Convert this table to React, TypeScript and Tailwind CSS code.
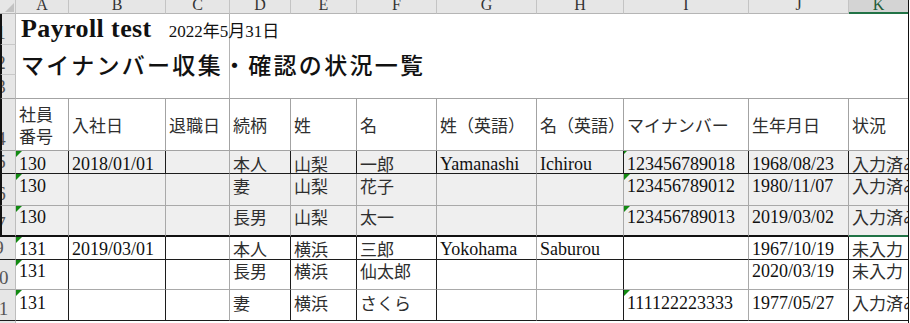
const SERIF = "font-['Liberation_Serif','Noto_Sans_CJK_JP',serif]"
const JP = "font-['Noto_Sans_CJK_JP','Noto_Sans',sans-serif]"

const LETTERS = ['A', 'B', 'C', 'D', 'E', 'F', 'G', 'H', 'I', 'J', 'K']

type Line = 'd' | 'g' | 'n'
type Tri = 'big' | 'small' | null

const RIGHT: Record<Line, string> = {
  d: 'border-r border-r-[#1c1c1c]',
  g: 'border-r border-r-[#a9a9a9]',
  n: '',
}

const BOTTOM: Record<string, string> = {
  d: 'border-b border-b-[#1c1c1c]',
  g: 'border-b border-b-[#a9a9a9]',
  t: 'border-b-2 border-b-[#111111]',
  sel: 'border-b-2 border-b-[#217346]',
}

type Row = {
  n: string
  cells: string[]
  v: Line[]
  b: string
  bg: string
  pt: string
  tri: Tri[]
  edge?: boolean
  selK?: boolean
}

const row5V: Line[] = ['d', 'd', 'g', 'd', 'd', 'd', 'g', 'd', 'd', 'd', 'n']
const grayV: Line[] = ['g', 'g', 'g', 'g', 'g', 'g', 'g', 'g', 'g', 'g', 'n']
const lowV: Line[] = ['d', 'd', 'g', 'd', 'd', 'd', 'g', 'd', 'g', 'd', 'n']

const triA: Tri[] = ['big', null, null, null, null, null, null, null, null, null, null]
const triAI: Tri[] = ['big', null, null, null, null, null, null, null, 'big', null, null]
const triAi: Tri[] = ['big', null, null, null, null, null, null, null, 'small', null, null]

const rows: Row[] = [
  {
    n: '5',
    cells: ['130', '2018/01/01', '', '本人', '山梨', '一郎', 'Yamanashi', 'Ichirou', '123456789018', '1968/08/23', '入力済み'],
    v: row5V, b: 'd', bg: 'bg-[#efefef]', pt: 'pt-[3px]', tri: triAi, edge: true,
  },
  {
    n: '6',
    cells: ['130', '', '', '妻', '山梨', '花子', '', '', '123456789012', '1980/11/07', '入力済み'],
    v: grayV, b: 'g', bg: 'bg-[#efefef]', pt: 'pt-[2px]', tri: triAI, edge: true,
  },
  {
    n: '7',
    cells: ['130', '', '', '長男', '山梨', '太一', '', '', '123456789013', '2019/03/02', '入力済み'],
    v: grayV, b: 't', bg: 'bg-[#efefef]', pt: 'pt-[1px]', tri: triAI, edge: true, selK: true,
  },
  {
    n: '9',
    cells: ['131', '2019/03/01', '', '本人', '横浜', '三郎', 'Yokohama', 'Saburou', '', '1967/10/19', '未入力'],
    v: lowV, b: 'd', bg: 'bg-white', pt: 'pt-[2px]', tri: triA,
  },
  {
    n: '10',
    cells: ['131', '', '', '長男', '横浜', '仙太郎', '', '', '', '2020/03/19', '未入力'],
    v: lowV, b: 'g', bg: 'bg-white', pt: 'pt-[1px]', tri: triA,
  },
  {
    n: '11',
    cells: ['131', '', '', '妻', '横浜', 'さくら', '', '', '111122223333', '1977/05/27', '入力済み'],
    v: lowV, b: 'd', bg: 'bg-white', pt: 'pt-[3px]', tri: triAI,
  },
]

const heads = ['社員\n番号', '入社日', '退職日', '続柄', '姓', '名', '姓（英語）', '名（英語）', 'マイナンバー', '生年月日', '状況']

const isAscii = (s: string) => /^[\x00-\x7F]*$/.test(s)

function Flag({ size }: { size: 'big' | 'small' }) {
  const s = size === 'big' ? 6 : 3
  return (
    <svg className="absolute left-0 top-0" width={s} height={s} viewBox="0 0 6 6">
      <polygon points="0,0 6,0 0,6" fill="#128a12" />
    </svg>
  )
}

function RowHead({ label, edge, bottom }: { label: string; edge?: boolean; bottom: string }) {
  return (
    <div
      className={`flex items-end overflow-hidden bg-[#e6e6e6] border-r border-r-[#bdbdbd] ${bottom} ${
        edge ? 'border-l-2 border-l-[#111111]' : ''
      }`}
    >
      <div className={`w-[30px] shrink-0 ml-[-16px] text-center pb-[2px] text-[19px] leading-none text-[#555] ${SERIF}`}>
        {label}
      </div>
    </div>
  )
}

export default function App() {
  return (
    <div className="w-[910px] h-[323px] overflow-hidden bg-white">
      <div className="w-[909px] border-r border-r-[#111111] grid grid-cols-[16px_53px_97px_64px_61px_66px_80px_100px_87px_125px_100px_59px] grid-rows-[14px_31px_30px_24px_52px_23px_32px_31px_23px_30px_31px_2px]">
        {/* column letters */}
        <div className="relative bg-[#e6e6e6] border-r border-r-[#c4c4c4] border-b border-b-[#b5b5b5]">
          <svg className="absolute right-[1px] bottom-[1px]" width="9" height="9" viewBox="0 0 9 9">
            <polygon points="9,0 9,9 0,9" fill="#c2c2c2" />
          </svg>
        </div>
        {LETTERS.map((l) =>
          l === 'K' ? (
            <div
              key={l}
              className={`overflow-hidden text-center bg-[#d4d4d4] border-b-2 border-b-[#217346] text-[#1f5c38] text-[16px] leading-[10px] ${SERIF}`}
            >
              {l}
            </div>
          ) : (
            <div
              key={l}
              className={`overflow-hidden text-center bg-[#e6e6e6] border-r border-r-[#c4c4c4] border-b border-b-[#b5b5b5] text-[#333] text-[16px] leading-[10px] ${SERIF}`}
            >
              {l}
            </div>
          )
        )}

        {/* title rows 1-3 */}
        <RowHead label="1" edge bottom="border-b border-b-[#c8c8c8]" />
        <div className="col-span-3 row-span-3 relative z-10 border-r border-r-[#b4b4b4] border-b border-b-[#a3a3a3] pl-[5px] whitespace-nowrap text-[#111]">
          <div className="flex items-baseline gap-[17px] pt-[1px]">
            <span className={`font-bold text-[26px] tracking-[0.4px] leading-[28px] ${SERIF}`}>Payroll test</span>
            <span className={`text-[17px] leading-[28px] ${SERIF}`}>2022年5月31日</span>
          </div>
          <div className={`mt-[3px] text-[23px] leading-[30px] tracking-[2.3px] font-medium ${JP}`}>
            マイナンバー収集・確認の状況一覧
          </div>
        </div>
        <div className="col-span-8 row-span-3 border-b border-b-[#a3a3a3]" />
        <RowHead label="2" edge bottom="border-b border-b-[#c8c8c8]" />
        <RowHead label="3" edge bottom="border-b border-b-[#a3a3a3]" />

        {/* header row 4 */}
        <RowHead label="4" edge bottom="border-b border-b-[#a3a3a3]" />
        {heads.map((h, i) => (
          <div
            key={h}
            className={`flex items-center overflow-hidden whitespace-pre bg-white pl-[3px] text-[17px] leading-[22px] text-[#2e2e2e] ${JP} ${
              i < 10 ? 'border-r border-r-[#a3a3a3]' : ''
            } border-b border-b-[#a3a3a3]`}
          >
            {h}
          </div>
        ))}

        {/* data rows */}
        {rows.map((r) => (
          <div key={r.n} className="contents">
            <RowHead label={r.n} edge={r.edge} bottom={BOTTOM[r.b]} />
            {r.cells.map((c, i) => {
              const bottom = r.selK && i === 10 ? BOTTOM.sel : BOTTOM[r.b]
              const t = r.tri[i]
              return (
                <div
                  key={i}
                  className={`relative overflow-hidden whitespace-nowrap pl-[3px] ${r.pt} ${r.bg} ${RIGHT[r.v[i]]} ${bottom} ${
                    isAscii(c)
                      ? `${SERIF} text-[18px] leading-[20px] text-[#111]`
                      : `${JP} text-[17px] leading-[20px] text-[#2e2e2e]`
                  }`}
                >
                  {t && <Flag size={t} />}
                  {c}
                </div>
              )
            })}
          </div>
        ))}

        {/* row 12 sliver */}
        <div className="bg-[#e6e6e6] border-r border-r-[#bdbdbd]" />
        <div className="col-span-11 bg-white" />
      </div>
    </div>
  )
}
